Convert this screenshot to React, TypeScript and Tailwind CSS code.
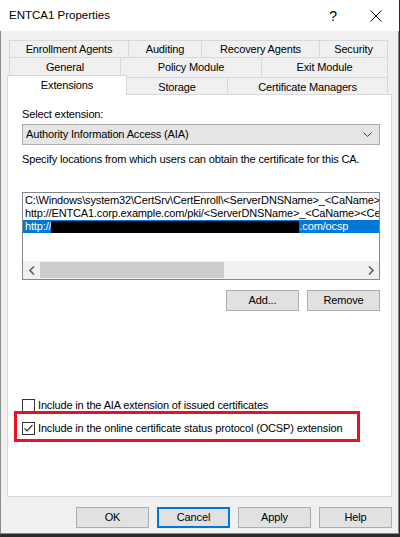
import React from 'react';

const FONT = { fontFamily: '"Liberation Sans", Arial, sans-serif' };

const Tab = ({ label, w, last }: { label: string; w: string; last?: boolean }) => (
  <div
    className={`${w} h-full flex items-center justify-center border-t border-l border-[#d9d9d9] bg-[#f0f0f0] ${last ? 'border-r' : ''}`}
  >
    {label}
  </div>
);

const Btn = ({ label, w = 'w-[73px]', focus }: { label: string; w?: string; focus?: boolean }) => (
  <button
    className={`${w} h-[21px] bg-[#e1e1e1] flex items-center justify-center ${focus ? 'border-2 border-[#0078d7]' : 'border border-[#adadad]'}`}
  >
    {label}
  </button>
);

const Check = ({ checked }: { checked?: boolean }) => (
  <div className="w-[13px] h-[13px] border border-[#333] bg-white flex items-center justify-center shrink-0">
    {checked && (
      <svg width="11" height="11" viewBox="0 0 11 11">
        <path d="M1.5 5.5 L4 8 L9.5 2" fill="none" stroke="#333" strokeWidth="1.2" />
      </svg>
    )}
  </div>
);

export default function App() {
  return (
    <div className="w-[400px] h-[537px] bg-[#2b2b2b] text-[11px] tracking-[-0.15px] text-black overflow-hidden" style={FONT}>
      <div className="w-[399px] h-[534px] flex flex-col">
        {/* title bar */}
        <div className="h-[31px] bg-white flex items-center pl-[9px] pt-[1px] shrink-0">
          <span className="text-[11.5px] tracking-normal flex-1">ENTCA1 Properties</span>
          <span className="text-[14px] w-[20px] text-center mr-[27px]">?</span>
          <svg width="12" height="12" viewBox="0 0 12 12" className="mr-[17px]">
            <path d="M0.5 0.5 L11.5 11.5 M11.5 0.5 L0.5 11.5" stroke="#000" strokeWidth="1" />
          </svg>
        </div>

        {/* body */}
        <div className="flex-1 bg-[#f0f0f0] border-x border-b border-[#8a8a8a] px-[6px] pt-[9px] pb-[5px] flex flex-col">
          {/* tab rows */}
          <div className="flex h-[17px] ml-[2px]">
            <Tab label="Enrollment Agents" w="w-[119px]" />
            <Tab label="Auditing" w="w-[73px]" />
            <Tab label="Recovery Agents" w="w-[118px]" />
            <Tab label="Security" w="w-[69px]" last />
          </div>
          <div className="flex h-[20px] ml-[2px]">
            <Tab label="General" w="w-[111px]" />
            <Tab label="Policy Module" w="w-[141px]" />
            <Tab label="Exit Module" w="w-[127px]" last />
          </div>
          <div className="flex h-[17px] items-end">
            <div className="relative z-10 w-[120px] h-[20px] -mt-[2px] mb-[-1px] bg-white border-t border-x border-[#d9d9d9] flex justify-center pt-[1px]">
              Extensions
            </div>
            <div className="w-[101px] h-full flex items-center justify-center border-t border-r border-[#d9d9d9] pt-[2px]">Storage</div>
            <div className="w-[160px] h-full flex items-center justify-center border-t border-r border-[#d9d9d9] pt-[2px]">Certificate Managers</div>
          </div>

          {/* panel */}
          <div className="h-[403px] bg-white border border-[#d9d9d9] pl-[14px] pr-[11px] pt-[12px] flex flex-col">
            <div className="h-[15px] leading-[15px]">Select extension:</div>
            <div className="mt-[2px] h-[21px] bg-[#e5e5e5] border border-[#adadad] flex items-center pl-[3px] pr-[7px]">
              <span className="flex-1">Authority Information Access (AIA)</span>
              <svg width="9" height="6" viewBox="0 0 9 6">
                <path d="M0.5 0.5 L4.5 4.5 L8.5 0.5" fill="none" stroke="#444" strokeWidth="1" />
              </svg>
            </div>
            <div className="mt-[7px] h-[15px] leading-[15px] whitespace-nowrap">Specify locations from which users can obtain the certificate for this CA.</div>

            {/* listbox */}
            <div className="mt-[25px] h-[88px] border border-[#828790] bg-white flex flex-col">
              <div className="flex-1 pt-[1px] overflow-hidden whitespace-nowrap">
                <div className="h-[13px] leading-[13px] pl-[2px]">C:\Windows\system32\CertSrv\CertEnroll\&lt;ServerDNSName&gt;_&lt;CaName&gt;&lt;CertificateName&gt;.crt</div>
                <div className="h-[13px] leading-[13px] pl-[2px]">http://ENTCA1.corp.example.com/pki/&lt;ServerDNSName&gt;_&lt;CaName&gt;&lt;CertificateName&gt;.crt</div>
                <div className="h-[13px] leading-[13px] pl-[2px] bg-[#0078d7] text-white flex items-center">
                  <span>http://</span>
                  <span className="w-[248px] h-[12px] bg-black"></span>
                  <span>.com/ocsp</span>
                </div>
              </div>
              <div className="h-[18px] bg-[#f0f0f0] flex items-stretch">
                <div className="w-[17px] flex items-center justify-center">
                  <svg width="6" height="9" viewBox="0 0 6 9">
                    <path d="M5 0.5 L1 4.5 L5 8.5" fill="none" stroke="#606060" strokeWidth="1.6" />
                  </svg>
                </div>
                <div className="flex-1 flex items-stretch py-[1px]">
                  <div className="w-[184px] bg-[#cdcdcd]"></div>
                </div>
                <div className="w-[17px] flex items-center justify-center">
                  <svg width="6" height="9" viewBox="0 0 6 9">
                    <path d="M1 0.5 L5 4.5 L1 8.5" fill="none" stroke="#606060" strokeWidth="1.6" />
                  </svg>
                </div>
              </div>
            </div>

            <div className="mt-[10px] flex justify-end gap-[8px]">
              <Btn label="Add..." />
              <Btn label="Remove" />
            </div>

            {/* checkboxes */}
            <div className="mt-[88px] flex items-center gap-[3px] h-[13px]">
              <Check />
              <span>Include in the AIA extension of issued certificates</span>
            </div>
            <div className="relative mt-[10px] flex items-center gap-[3px] h-[13px]">
              <Check checked />
              <span>Include in the online certificate status protocol (OCSP) extension</span>
              <div className="absolute left-[-8px] top-[-11px] w-[346px] h-[31px] border-[3px] border-[#e81123]"></div>
            </div>
          </div>

          {/* dialog buttons */}
          <div className="mt-[10px] flex justify-end gap-[8px]">
            <Btn label="OK" />
            <Btn label="Cancel" focus />
            <Btn label="Apply" />
            <Btn label="Help" />
          </div>
        </div>
      </div>
    </div>
  );
}
